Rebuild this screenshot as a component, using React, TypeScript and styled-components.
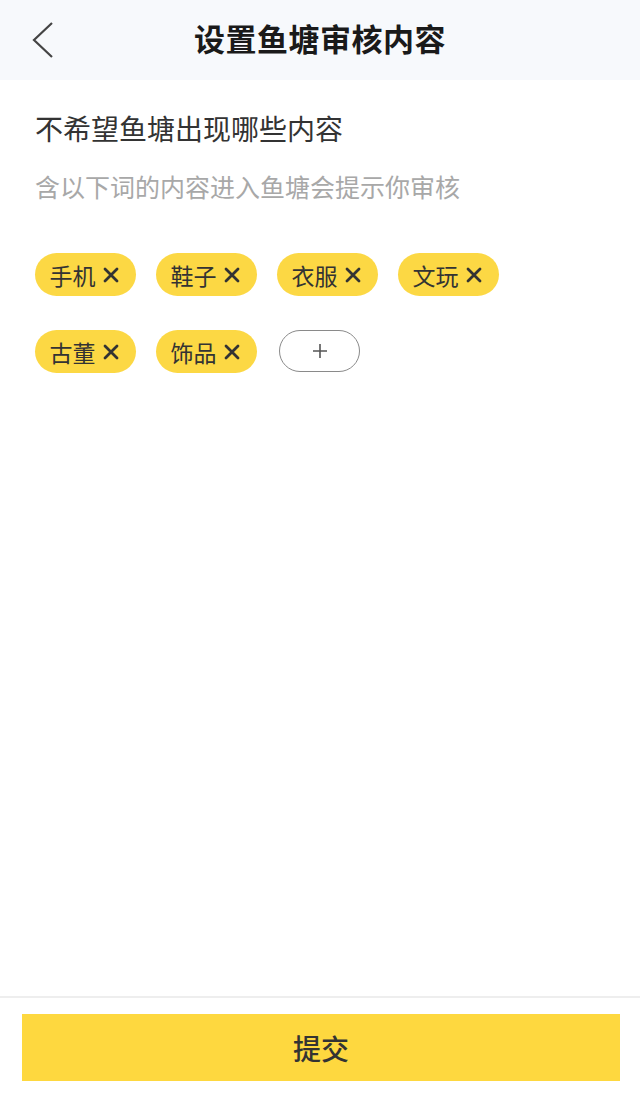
import React, { useState } from 'react';
import styled, { createGlobalStyle } from 'styled-components';

const GlobalStyle = createGlobalStyle`
  html, body {
    margin: 0;
    padding: 0;
    background: #ffffff;
  }
  body {
    font-family: "Noto Sans CJK SC", "Noto Sans", sans-serif;
    color: #333333;
  }
`;

const Page = styled.div`
  display: flex;
  flex-direction: column;
  width: 640px;
  height: 1100px;
  background: #ffffff;
`;

const Header = styled.header`
  display: grid;
  grid-template-columns: 80px 1fr 80px;
  align-items: center;
  height: 80px;
  background: #f7f9fc;
  flex-shrink: 0;
`;

const BackButton = styled.button`
  display: flex;
  align-items: center;
  justify-content: flex-start;
  padding: 0 0 0 30px;
  height: 80px;
  border: none;
  background: transparent;
  cursor: pointer;
`;

const Title = styled.h1`
  margin: 0 0 5px;
  text-align: center;
  font-size: 31px;
  font-weight: 700;
  color: #1a1a1a;
  letter-spacing: 0.5px;
`;

const Content = styled.main`
  flex: 1;
  padding: 26px 35px 0;
`;

const Heading = styled.h2`
  margin: 0;
  font-size: 28px;
  font-weight: 400;
  line-height: 44px;
  color: #333333;
`;

const Hint = styled.p`
  margin: 18px 0 0;
  font-size: 25px;
  line-height: 36px;
  color: #a8a8a8;
`;

const TagGrid = styled.div`
  display: flex;
  flex-wrap: wrap;
  column-gap: 20px;
  row-gap: 34px;
  margin-top: 49px;
  width: 500px;
`;

const Tag = styled.span`
  display: inline-flex;
  align-items: center;
  justify-content: center;
  gap: 6px;
  width: 101px;
  height: 43px;
  box-sizing: border-box;
  padding: 0 10px 0 8px;
  border-radius: 22px;
  background: #fcd844;
  font-size: 23px;
  color: #333333;
`;

const RemoveButton = styled.button`
  display: flex;
  align-items: center;
  padding: 0;
  border: none;
  background: transparent;
  cursor: pointer;
`;

const AddTag = styled.button`
  display: flex;
  align-items: center;
  justify-content: center;
  width: 81px;
  height: 42px;
  box-sizing: border-box;
  border: 1.5px solid #8a8a8a;
  border-radius: 21px;
  background: #ffffff;
  cursor: pointer;
  margin-left: 2px;
`;

const Footer = styled.footer`
  flex-shrink: 0;
  border-top: 2px solid #eeeeee;
  padding: 16px 20px 19px 22px;
`;

const SubmitButton = styled.button`
  display: block;
  width: 598px;
  height: 67px;
  border: none;
  background: #fed83f;
  font-family: inherit;
  font-size: 28px;
  font-weight: 500;
  color: #333333;
  cursor: pointer;
`;

const ChevronLeft = () => (
  <svg width="24" height="38" viewBox="0 0 24 38" fill="none">
    <path d="M22 2 L4 19 L22 36" stroke="#444" strokeWidth="2.2" strokeLinejoin="miter" />
  </svg>
);

const CrossIcon = () => (
  <svg width="18" height="18" viewBox="0 0 18 18">
    <path d="M3 3 L15 15 M15 3 L3 15" stroke="#333" strokeWidth="2.8" strokeLinecap="round" />
  </svg>
);

const PlusIcon = () => (
  <svg width="16" height="16" viewBox="0 0 16 16">
    <path d="M8 1 V15 M1 8 H15" stroke="#555" strokeWidth="1.6" />
  </svg>
);

export default function App() {
  const [tags, setTags] = useState(['手机', '鞋子', '衣服', '文玩', '古董', '饰品']);

  const removeTag = (index: number) => {
    setTags(prev => prev.filter((_, i) => i !== index));
  };

  return (
    <Page>
      <GlobalStyle />
      <Header>
        <BackButton aria-label="返回">
          <ChevronLeft />
        </BackButton>
        <Title>设置鱼塘审核内容</Title>
        <span />
      </Header>

      <Content>
        <Heading>不希望鱼塘出现哪些内容</Heading>
        <Hint>含以下词的内容进入鱼塘会提示你审核</Hint>

        <TagGrid>
          {tags.map((tag, index) => (
            <Tag key={tag}>
              {tag}
              <RemoveButton onClick={() => removeTag(index)} aria-label="删除">
                <CrossIcon />
              </RemoveButton>
            </Tag>
          ))}
          <AddTag aria-label="添加">
            <PlusIcon />
          </AddTag>
        </TagGrid>
      </Content>

      <Footer>
        <SubmitButton>提交</SubmitButton>
      </Footer>
    </Page>
  );
}
